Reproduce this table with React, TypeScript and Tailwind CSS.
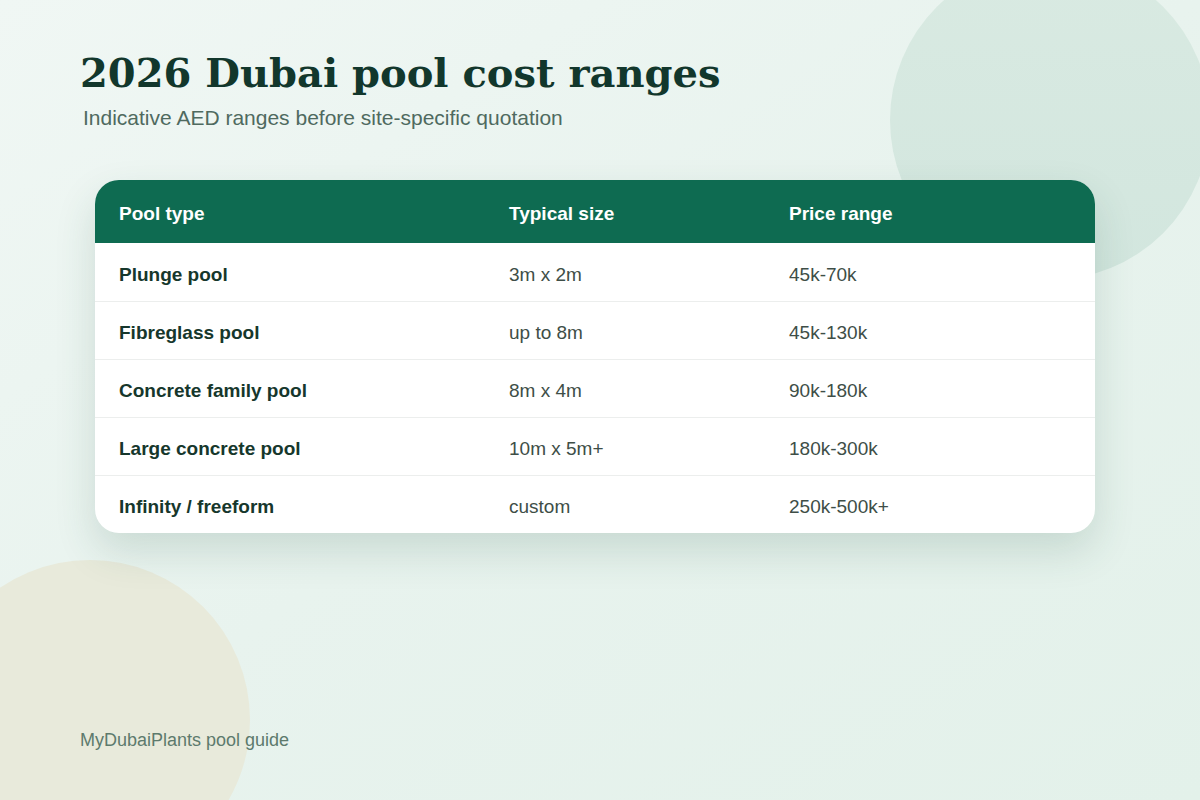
const rows = [
  { type: 'Plunge pool', size: '3m x 2m', price: '45k-70k' },
  { type: 'Fibreglass pool', size: 'up to 8m', price: '45k-130k' },
  { type: 'Concrete family pool', size: '8m x 4m', price: '90k-180k' },
  { type: 'Large concrete pool', size: '10m x 5m+', price: '180k-300k' },
  { type: 'Infinity / freeform', size: 'custom', price: '250k-500k+' },
]

export default function App() {
  return (
    <div className="relative w-[1200px] h-[800px] overflow-hidden bg-gradient-to-br from-[#f0f7f4] via-[#e8f3ee] to-[#e3f1ea] font-['Liberation_Sans',Arial,sans-serif]">
      {/* background blobs */}
      <div className="absolute left-[890px] top-[-40px] w-[320px] h-[320px] rounded-full bg-gradient-to-b from-[#d9eae2] to-[#d2e6de]" />
      <div className="absolute left-[-70px] top-[560px] w-[320px] h-[320px] rounded-full bg-[#e8eadb]" />

      <div className="relative flex flex-col h-full px-[80px] pt-[49px] pb-[50px]">
        <h1 className="font-['DejaVu_Serif',Georgia,serif] font-bold text-[40px] leading-[48px] text-[#12372c]">
          2026 Dubai pool cost ranges
        </h1>
        <p className="mt-[9px] ml-[3px] text-[21px] leading-[24px] text-[#4f6a5f]">
          Indicative AED ranges before site-specific quotation
        </p>

        <div className="mt-[50px] ml-[15px] w-[1000px] rounded-[24px] bg-white overflow-hidden shadow-[0_18px_40px_rgba(40,90,70,0.16)]">
          <div className="flex items-center h-[63px] bg-[#0e6b51] px-[24px] pt-[6px] text-white font-bold text-[19px]">
            <div className="w-[390px]">Pool type</div>
            <div className="w-[280px]">Typical size</div>
            <div className="flex-1">Price range</div>
          </div>
          {rows.map((r, i) => (
            <div
              key={r.type}
              className={`flex items-center h-[58px] px-[24px] pt-[6px] text-[19px] ${i > 0 ? 'border-t border-[#eceeed]' : ''}`}
            >
              <div className="w-[390px] font-bold text-[#16372c]">{r.type}</div>
              <div className="w-[280px] text-[#3e4e47]">{r.size}</div>
              <div className="flex-1 text-[#3e4e47]">{r.price}</div>
            </div>
          ))}
        </div>

        <div className="mt-auto text-[18px] leading-[20px] text-[#5d7a6d]">MyDubaiPlants pool guide</div>
      </div>
    </div>
  )
}
